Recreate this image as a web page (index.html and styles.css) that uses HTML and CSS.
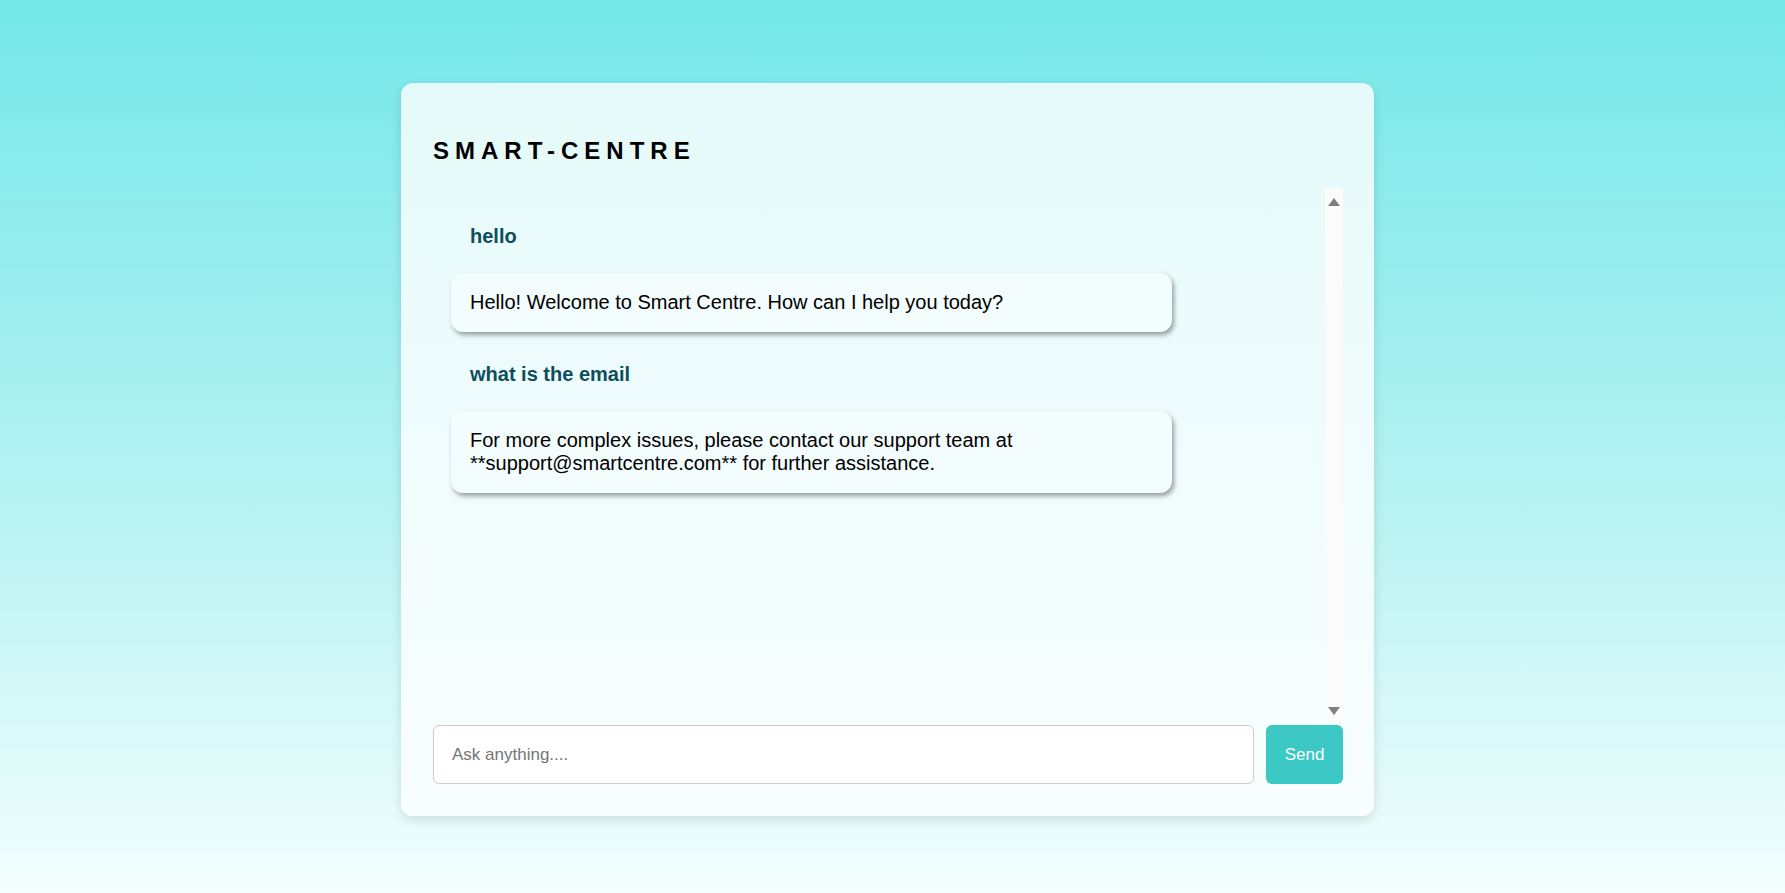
FILE: index.html
```html
<!DOCTYPE html>
<html lang="en">
<head>
<meta charset="utf-8">
<title>Smart Centre</title>
<link rel="stylesheet" href="styles.css">
</head>
<body>
<div class="page">
  <div class="card">
    <h1 class="title">SMART-CENTRE</h1>
    <div class="chat">
      <div class="messages">
        <div class="msg msg-user">hello</div>
        <div class="msg msg-bot">Hello! Welcome to Smart Centre. How can I help you today?</div>
        <div class="msg msg-user">what is the email</div>
        <div class="msg msg-bot">For more complex issues, please contact our support team at **support@smartcentre.com** for further assistance.</div>
      </div>
      <div class="rail" aria-hidden="true">
        <span class="arrow arrow-up"></span>
        <span class="arrow arrow-down"></span>
      </div>
    </div>
    <div class="composer">
      <input class="ask" type="text" placeholder="Ask anything....">
      <button class="send" type="button">Send</button>
    </div>
  </div>
</div>
</body>
</html>
```

FILE: styles.css
```css
html, body {
  margin: 0;
  padding: 0;
}
body {
  min-height: 100vh;
  background: linear-gradient(to bottom, #74e7e9 0%, #b5f2f2 55%, #f4fefe 100%);
  font-family: "Liberation Sans", Arial, sans-serif;
  color: #000;
}
.page {
  display: flex;
  justify-content: center;
  padding: 83px 10px 0 0;
}
.card {
  box-sizing: border-box;
  width: 973px;
  height: 733px;
  padding: 0 31px 32px 32px;
  border-radius: 12px;
  background: linear-gradient(to bottom, #e5fafa 0%, #f0fcfd 50%, #f8fefe 100%);
  box-shadow: 0 4px 12px rgba(0, 0, 0, 0.12);
  display: flex;
  flex-direction: column;
}
.title {
  margin: 54px 0 23px 0;
  font-size: 24px;
  line-height: 28px;
  font-weight: 700;
  letter-spacing: 6px;
  color: #000;
}
.chat {
  flex: 1;
  min-height: 0;
  display: flex;
}
.messages {
  flex: 1;
  min-width: 0;
  overflow: hidden;
  padding: 19px 0 0 18px;
}
.rail {
  width: 18px;
  background: #fbfbfb;
  display: flex;
  flex-direction: column;
  justify-content: space-between;
  align-items: center;
  padding: 10px 0 7px 0;
  box-sizing: border-box;
}
.arrow {
  width: 0;
  height: 0;
  border-left: 6px solid transparent;
  border-right: 6px solid transparent;
}
.arrow-up {
  border-bottom: 8px solid #808080;
}
.arrow-down {
  border-top: 8px solid #808080;
}
.msg {
  font-size: 20px;
  line-height: 23px;
  padding: 18px 19px;
}
.msg-user {
  font-weight: 700;
  color: #0b4f5b;
  margin-bottom: 7px;
}
.msg-bot {
  width: 721px;
  box-sizing: border-box;
  background: #f3fdfd;
  border-radius: 12px;
  box-shadow: 2px 3px 5px rgba(0, 0, 0, 0.38);
  margin-bottom: 13px;
  color: #000;
}
.composer {
  display: flex;
  gap: 12px;
  margin-top: 3px;
}
.ask {
  flex: 1;
  height: 59px;
  box-sizing: border-box;
  border: 1px solid #cccccc;
  border-radius: 6px;
  padding: 0 18px;
  font-family: "Liberation Sans", Arial, sans-serif;
  font-size: 17px;
  background: #fff;
  color: #000;
  outline: none;
}
.ask::placeholder {
  color: #757575;
}
.send {
  width: 77px;
  height: 59px;
  border: none;
  border-radius: 6px;
  background: #3cc8c4;
  color: #fff;
  font-family: "Liberation Sans", Arial, sans-serif;
  font-size: 17px;
  cursor: pointer;
}
```
